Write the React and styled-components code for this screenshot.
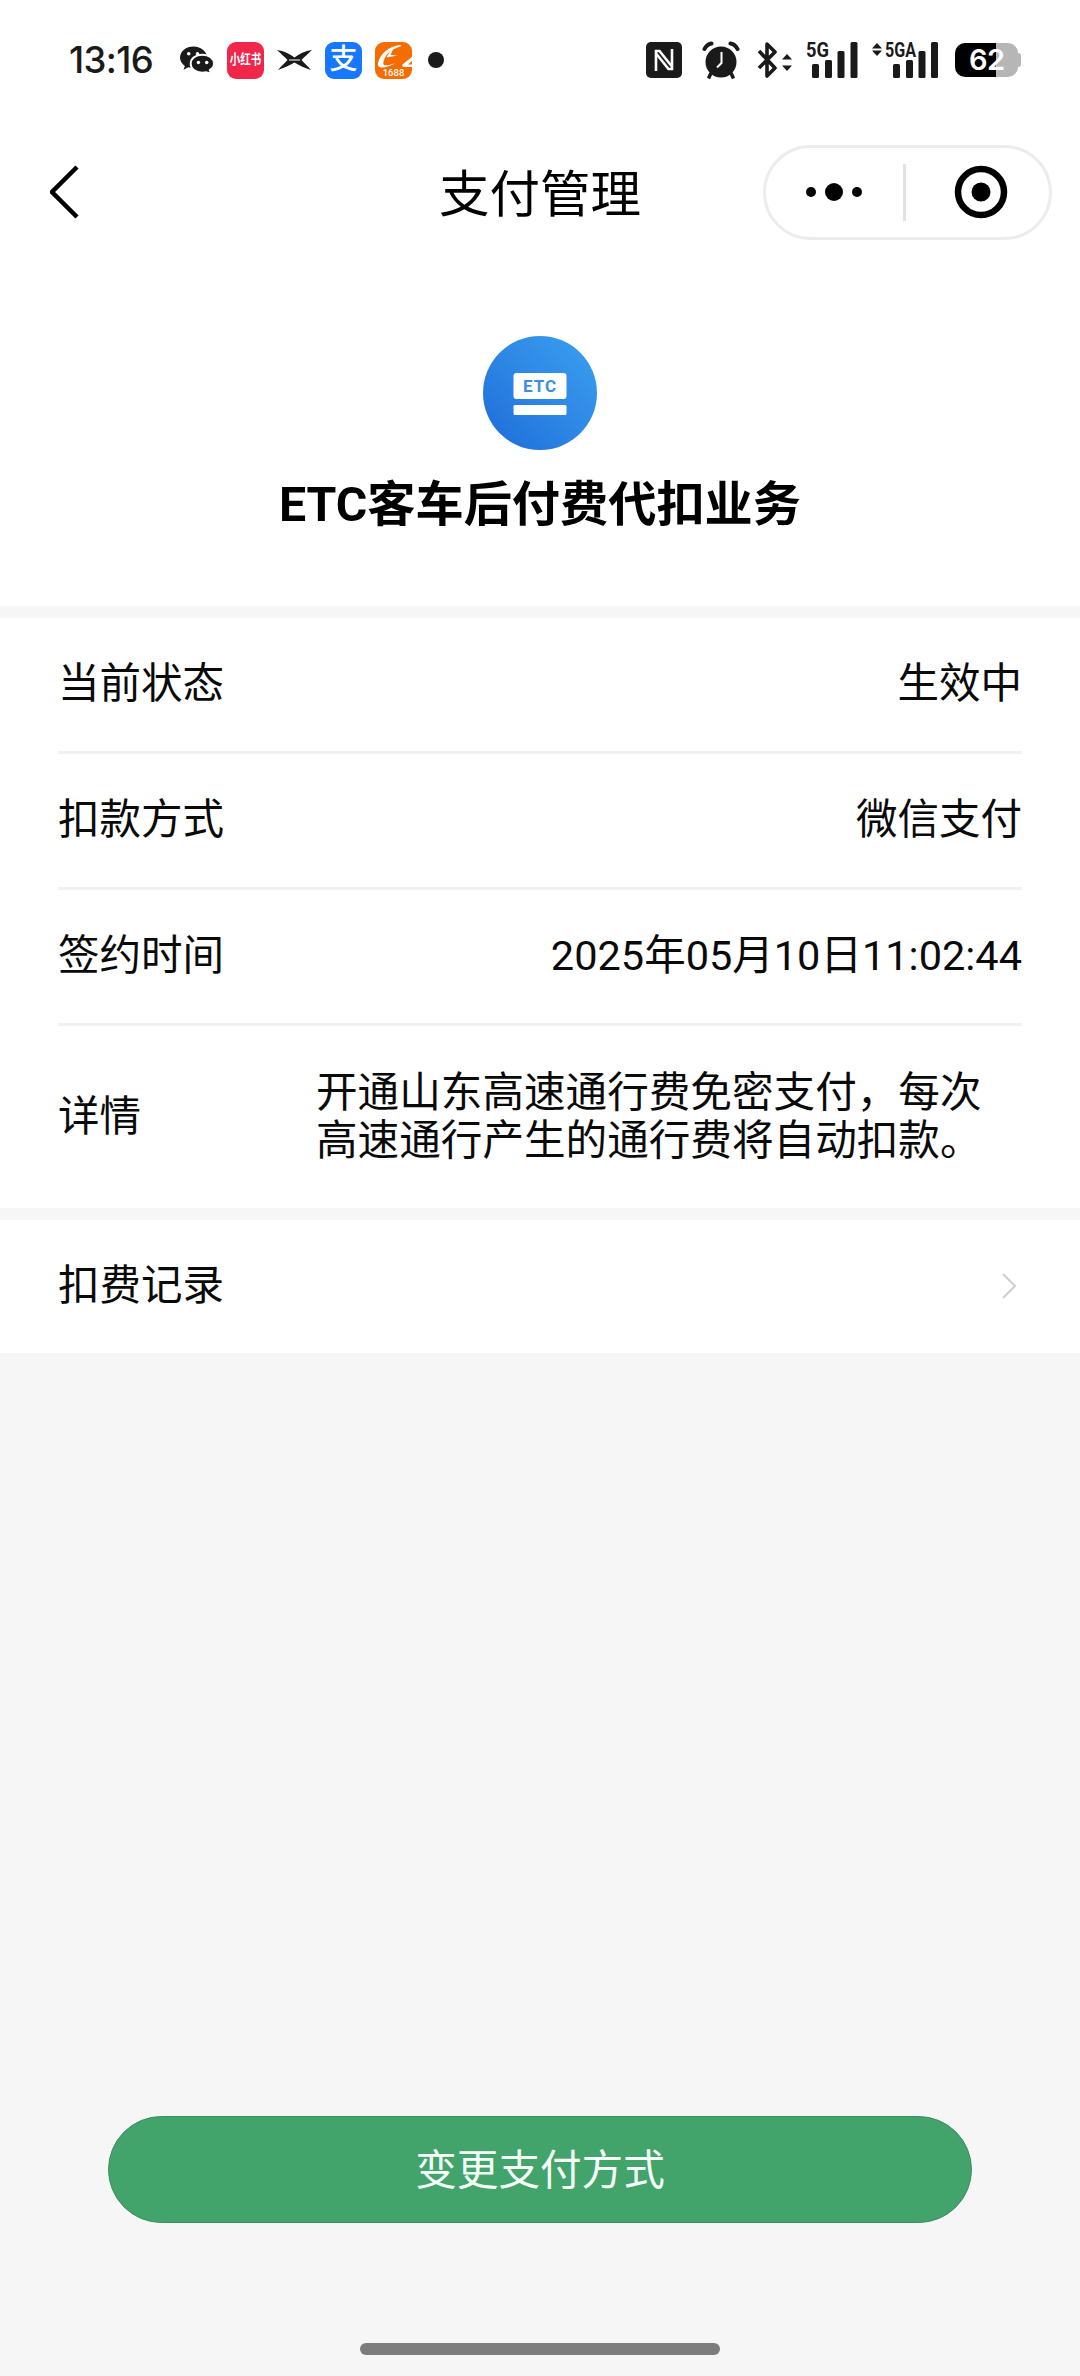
import React from "react";
import styled, { createGlobalStyle } from "styled-components";

const Global = createGlobalStyle`
  html, body { margin: 0; padding: 0; background: #f6f6f6; }
  * { box-sizing: border-box; }
  body { font-family: Roboto, "Noto Sans CJK SC", sans-serif; color: #0a0a0a; }
`;

const Page = styled.div`
  width: 1080px;
  height: 2376px;
  display: flex;
  flex-direction: column;
  background: #f6f6f6;
  overflow: hidden;
`;

const StatusBar = styled.div`
  height: 120px;
  background: #fff;
  display: flex;
  align-items: center;
  justify-content: space-between;
  padding: 0 59px 0 69px;
`;
const StatusGroup = styled.div`
  display: flex;
  align-items: center;
  gap: ${(p) => p.$gap || 0}px;
`;
const Slot = styled.div`
  display: flex;
  margin-left: ${(p) => p.$ml || 0}px;
`;
const Clock = styled.span`
  font-family: Inter, sans-serif;
  font-size: 36.5px;
  font-weight: 500;
  line-height: 36px;
  width: 84px;
  margin-right: 14px;
  letter-spacing: -0.6px;
  color: #1a1a1a;
  white-space: nowrap;
`;
const AppBadge = styled.div`
  width: 37px;
  height: 37px;
  border-radius: 9px;
  background: ${(p) => p.$bg};
  color: #fff;
  display: flex;
  align-items: center;
  justify-content: center;
  overflow: hidden;
  flex: none;
`;
const RedBookText = styled.span`
  font-size: 10.5px;
  font-weight: 700;
  line-height: 14px;
  white-space: nowrap;
  transform: scaleY(1.25);
`;
const AlipayGlyph = styled.span`
  font-size: 28px;
  font-weight: 500;
  line-height: 30px;
`;
const MoreDot = styled.span`
  width: 16px;
  height: 16px;
  border-radius: 50%;
  background: #1a1a1a;
  margin-left: 3px;
`;
const Battery = styled.div`
  position: relative;
  width: 63px;
  height: 34px;
  margin-right: 3px;
  margin-left: 17px;
  border-radius: 10px;
  background: linear-gradient(90deg, #000 0 41px, #b6b6b6 41px);
  color: #fff;
  font-family: Inter, sans-serif;
  font-size: 29px;
  font-weight: 600;
  line-height: 34px;
  padding-left: 14px;
  letter-spacing: -0.5px;
  &::after {
    content: "";
    position: absolute;
    right: -3px;
    top: 10px;
    width: 3px;
    height: 14px;
    border-radius: 0 3px 3px 0;
    background: #b6b6b6;
  }
`;

const NavBar = styled.div`
  height: 144px;
  background: #fff;
  display: grid;
  grid-template-columns: 1fr auto 1fr;
  align-items: center;
  padding: 0 28px;
`;
const BackBtn = styled.div`
  display: flex;
  align-items: center;
  margin-left: 22px;
`;
const NavTitle = styled.div`
  font-size: 50.5px;
  line-height: 60px;
  font-weight: 400;
  color: #000;
  padding-top: 6px;
`;
const Capsule = styled.div`
  justify-self: end;
  width: 289px;
  height: 95px;
  border: 3px solid #ececec;
  border-radius: 48px;
  display: flex;
  align-items: center;
`;
const CapsuleSide = styled.div`
  flex: 1;
  display: flex;
  align-items: center;
  justify-content: center;
  padding-left: ${(p) => p.$pl || 0}px;
`;
const CapsuleDivider = styled.div`
  width: 3px;
  height: 57px;
  background: #e2e2e2;
`;

const Hero = styled.div`
  height: 342px;
  background: #fff;
  display: flex;
  flex-direction: column;
  align-items: center;
  padding-top: 72px;
`;
const Logo = styled.div`
  width: 114px;
  height: 114px;
  border-radius: 50%;
  background: linear-gradient(45deg, #1d6bd8 0%, #2f8ae6 55%, #3b9ff0 100%);
  display: flex;
  align-items: center;
  justify-content: center;
`;
const HeroTitle = styled.h1`
  margin: 24px 0 0;
  font-size: 48.2px;
  line-height: 62px;
  font-weight: 700;
  color: #000;
  white-space: nowrap;
`;

const Card = styled.div`
  margin-top: 12px;
  background: #fff;
  padding: 0 58px;
`;
const Row = styled.div`
  display: flex;
  align-items: center;
  justify-content: space-between;
  height: ${(p) => p.$h || 136}px;
  padding-bottom: ${(p) => (p.$line ? 2 : 0)}px;
  border-bottom: ${(p) => (p.$line ? "3px solid #f1f1f1" : "none")};
  font-size: 41.5px;
  line-height: 48px;
  color: #0a0a0a;
`;
const Label = styled.span`
  white-space: nowrap;
`;
const Value = styled.span`
  white-space: nowrap;
`;
const Detail = styled.span`
  width: 668px;
  margin-right: 38px;
  font-size: 41.6px;
  line-height: 48px;
`;
const LinkRow = styled(Row)`
  padding-right: 6px;
  padding-bottom: 2px;
`;

const Spacer = styled.div`
  flex: 1;
`;
const PrimaryButton = styled.button`
  display: block;
  margin: 0 108px;
  height: 107px;
  padding: 0 0 5px;
  border: 1px solid #3a8f5e;
  border-radius: 54px;
  background: #43a46b;
  color: #f6fff9;
  font-family: inherit;
  font-size: 41.6px;
  font-weight: 400;
`;
const HomeArea = styled.div`
  height: 153px;
  padding-top: 120px;
  display: flex;
  justify-content: center;
`;
const HomeBar = styled.div`
  width: 360px;
  height: 12px;
  border-radius: 6px;
  background: #7d7d7d;
`;

const ink = "#1a1a1a";

const WeChat = () => (
  <svg width="34" height="28" viewBox="0 0 35 28">
    <path d="M14 0C6.3 0 0 5 0 11.5c0 3.6 2 6.6 5 8.7L3.6 24l5-2.6c1.7.5 3.5.7 5.4.7 7.7 0 14-4.8 14-10.6S21.700 0 14 0z" fill={ink} />
    <path d="M23 8.500c-7 0-12 4.300-12 9.400s5 9.100 12 9.100c1.300 0 2.700-.2 3.900-.5l5.100 1.500-1.300-3.600c2.700-1.700 4.300-4 4.300-6.500 0-5.100-5-9.400-12-9.400z" fill={ink} stroke="#fff" strokeWidth="2" />
    <circle cx="9" cy="7.500" r="1.800" fill="#fff" />
    <circle cx="18" cy="7.500" r="1.800" fill="#fff" />
    <circle cx="19" cy="16.500" r="1.800" fill="#fff" />
    <circle cx="27.500" cy="16.500" r="1.800" fill="#fff" />
  </svg>
);

const XMark = () => (
  <svg width="35" height="22" viewBox="0 0 35 22">
    <path d="M0 1C7 2 13 5 17.500 8.500 22 5 28 2 35 1 31 5 27 8 24.500 11 27 14 31 17 34 21 27 19 22 16 17.500 13.500 13 16 7 19 1 21 4 17 8 14 10.500 11 8 8 4 5 0 1z" fill={ink} />
    <path d="M12 11h11" stroke="#fff" strokeWidth="1" />
  </svg>
);

const Orange1688 = () => (
  <svg width="37" height="37" viewBox="0 0 37 37">
    <rect width="37" height="37" rx="9" fill="#f56c00" />
    <path d="M25 3C14 4 5 12 3 21c-.6 3 1 4.500 4 4.500 4 0 9-2 13-4-4 1-9 2.500-11 1.500C7 21.500 10 13 15 9.500l-3.500 6 11-2-7-.5 2.500-5.500c3-1.500 6-3 9-3.500z" fill="#fff" />
    <path d="M37 15l-9 7c-1.500 1.500-.5 3 1.500 3H37v-2.500h-4l4-3.500z" fill="#fff" />
    <text x="18.500" y="34" textAnchor="middle" fontFamily="Roboto, sans-serif" fontSize="9.500" fontWeight="500" fill="#fff">1688</text>
  </svg>
);

const Nfc = () => (
  <svg width="36" height="36" viewBox="0 0 36 36">
    <rect width="36" height="36" rx="5" fill={ink} />
    <path d="M10 29V9h3.500L25.500 24" fill="none" stroke="#fff" strokeWidth="2.600" />
    <path d="M26 7v20h-3.500L10.500 12" fill="none" stroke="#fff" strokeWidth="2.600" />
  </svg>
);

const Alarm = () => (
  <svg width="38" height="38" viewBox="0 0 38 38">
    <circle cx="19" cy="21" r="15.500" fill={ink} />
    <path d="M2.500 8A10 10 0 0 1 9.500 2.500M35.500 8A10 10 0 0 0 28.500 2.500" fill="none" stroke={ink} strokeWidth="4" strokeLinecap="round" />
    <path d="M9 32l-2.500 5.500M29 32l2.500 5.500" stroke={ink} strokeWidth="3.500" />
    <path d="M19.500 11v11l-4.500 4.500" fill="none" stroke="#fff" strokeWidth="2" />
  </svg>
);

const Bluetooth = () => (
  <svg width="36" height="38" viewBox="0 0 36 38">
    <path d="M2 10l16 17-8 8V3l8 8L2 27" fill="none" stroke={ink} strokeWidth="3.600" strokeLinejoin="round" />
    <path d="M30 13l5 5.500H25zM30 30l-5-5.500h10z" fill={ink} />
  </svg>
);

const Signal5G = () => (
  <svg width="52" height="46" viewBox="0 -4 52 46">
    <text x="0" y="16" fontFamily="Roboto, sans-serif" fontWeight="700" fontSize="20" textLength="23" lengthAdjust="spacingAndGlyphs" fill={ink}>5G</text>
    <rect x="6" y="23" width="7" height="14" rx="1.500" fill={ink} />
    <rect x="19" y="19" width="7" height="18" rx="1.500" fill={ink} />
    <rect x="31.500" y="10" width="7" height="27" rx="1.500" fill={ink} />
    <rect x="44.500" y="1" width="7" height="36" rx="1.500" fill={ink} />
  </svg>
);

const Signal5GA = () => (
  <svg width="66" height="46" viewBox="0 -4 66 46">
    <path d="M5 2l5 5.500H0zM5 15L0 9.500h10z" fill={ink} />
    <text x="13" y="16" fontFamily="Roboto, sans-serif" fontWeight="700" fontSize="20" textLength="31" lengthAdjust="spacingAndGlyphs" fill={ink}>5GA</text>
    <rect x="21" y="23" width="7" height="14" rx="1.500" fill={ink} />
    <rect x="34" y="19" width="7" height="18" rx="1.500" fill={ink} />
    <rect x="46.500" y="10" width="7" height="27" rx="1.500" fill={ink} />
    <rect x="59" y="1" width="7" height="36" rx="1.500" fill={ink} />
  </svg>
);

const Chevron = () => (
  <svg width="30" height="54" viewBox="0 0 30 54">
    <path d="M27 2L2 27l25 25" fill="none" stroke="#000" strokeWidth="4.500" />
  </svg>
);

const Dots = () => (
  <svg width="58" height="20" viewBox="0 0 58 20">
    <circle cx="5" cy="10" r="5" fill="#000" />
    <circle cx="28" cy="10" r="9" fill="#000" />
    <circle cx="51" cy="10" r="5" fill="#000" />
  </svg>
);

const Target = () => (
  <svg width="54" height="54" viewBox="0 0 54 54">
    <circle cx="27" cy="27" r="23" fill="none" stroke="#000" strokeWidth="6.500" />
    <circle cx="27" cy="27" r="9.500" fill="#000" />
  </svg>
);

const EtcMark = () => (
  <svg width="54" height="44" viewBox="0 0 54 44">
    <rect x="0.500" y="2" width="53" height="26" rx="3" fill="#fff" />
    <rect x="0.500" y="34" width="53" height="10" rx="1.500" fill="#fff" />
    <text x="27" y="21" textAnchor="middle" fontFamily="Roboto, sans-serif" fontWeight="700" fontSize="17" letterSpacing="1" fill="#3d8fe6">ETC</text>
  </svg>
);

const ChevronRight = () => (
  <svg width="14" height="26" viewBox="0 0 14 26">
    <path d="M1 1l12 12L1 25" fill="none" stroke="#cfcfcf" strokeWidth="2" />
  </svg>
);

export default function App() {
  return (
    <Page>
      <Global />
      <StatusBar>
        <StatusGroup $gap={13}>
          <Clock>13:16</Clock>
          <WeChat />
          <AppBadge $bg="#f0274b"><RedBookText>小红书</RedBookText></AppBadge>
          <XMark />
          <AppBadge $bg="#1677ff"><AlipayGlyph>支</AlipayGlyph></AppBadge>
          <Orange1688 />
          <MoreDot />
        </StatusGroup>
        <StatusGroup>
          <Nfc />
          <Slot $ml={20}><Alarm /></Slot>
          <Slot $ml={17}><Bluetooth /></Slot>
          <Slot $ml={13}><Signal5G /></Slot>
          <Slot $ml={14}><Signal5GA /></Slot>
          <Battery>62</Battery>
        </StatusGroup>
      </StatusBar>
      <NavBar>
        <BackBtn><Chevron /></BackBtn>
        <NavTitle>支付管理</NavTitle>
        <Capsule>
          <CapsuleSide><Dots /></CapsuleSide>
          <CapsuleDivider />
          <CapsuleSide $pl={6}><Target /></CapsuleSide>
        </Capsule>
      </NavBar>
      <Hero>
        <Logo><EtcMark /></Logo>
        <HeroTitle>ETC客车后付费代扣业务</HeroTitle>
      </Hero>
      <Card>
        <Row $line><Label>当前状态</Label><Value>生效中</Value></Row>
        <Row $line><Label>扣款方式</Label><Value>微信支付</Value></Row>
        <Row $line><Label>签约时间</Label><Value>2025年05月10日11:02:44</Value></Row>
        <Row $h={182}><Label>详情</Label><Detail>开通山东高速通行费免密支付，每次高速通行产生的通行费将自动扣款。</Detail></Row>
      </Card>
      <Card>
        <LinkRow $h={133}><Label>扣费记录</Label><ChevronRight /></LinkRow>
      </Card>
      <Spacer />
      <PrimaryButton>变更支付方式</PrimaryButton>
      <HomeArea><HomeBar /></HomeArea>
    </Page>
  );
}
